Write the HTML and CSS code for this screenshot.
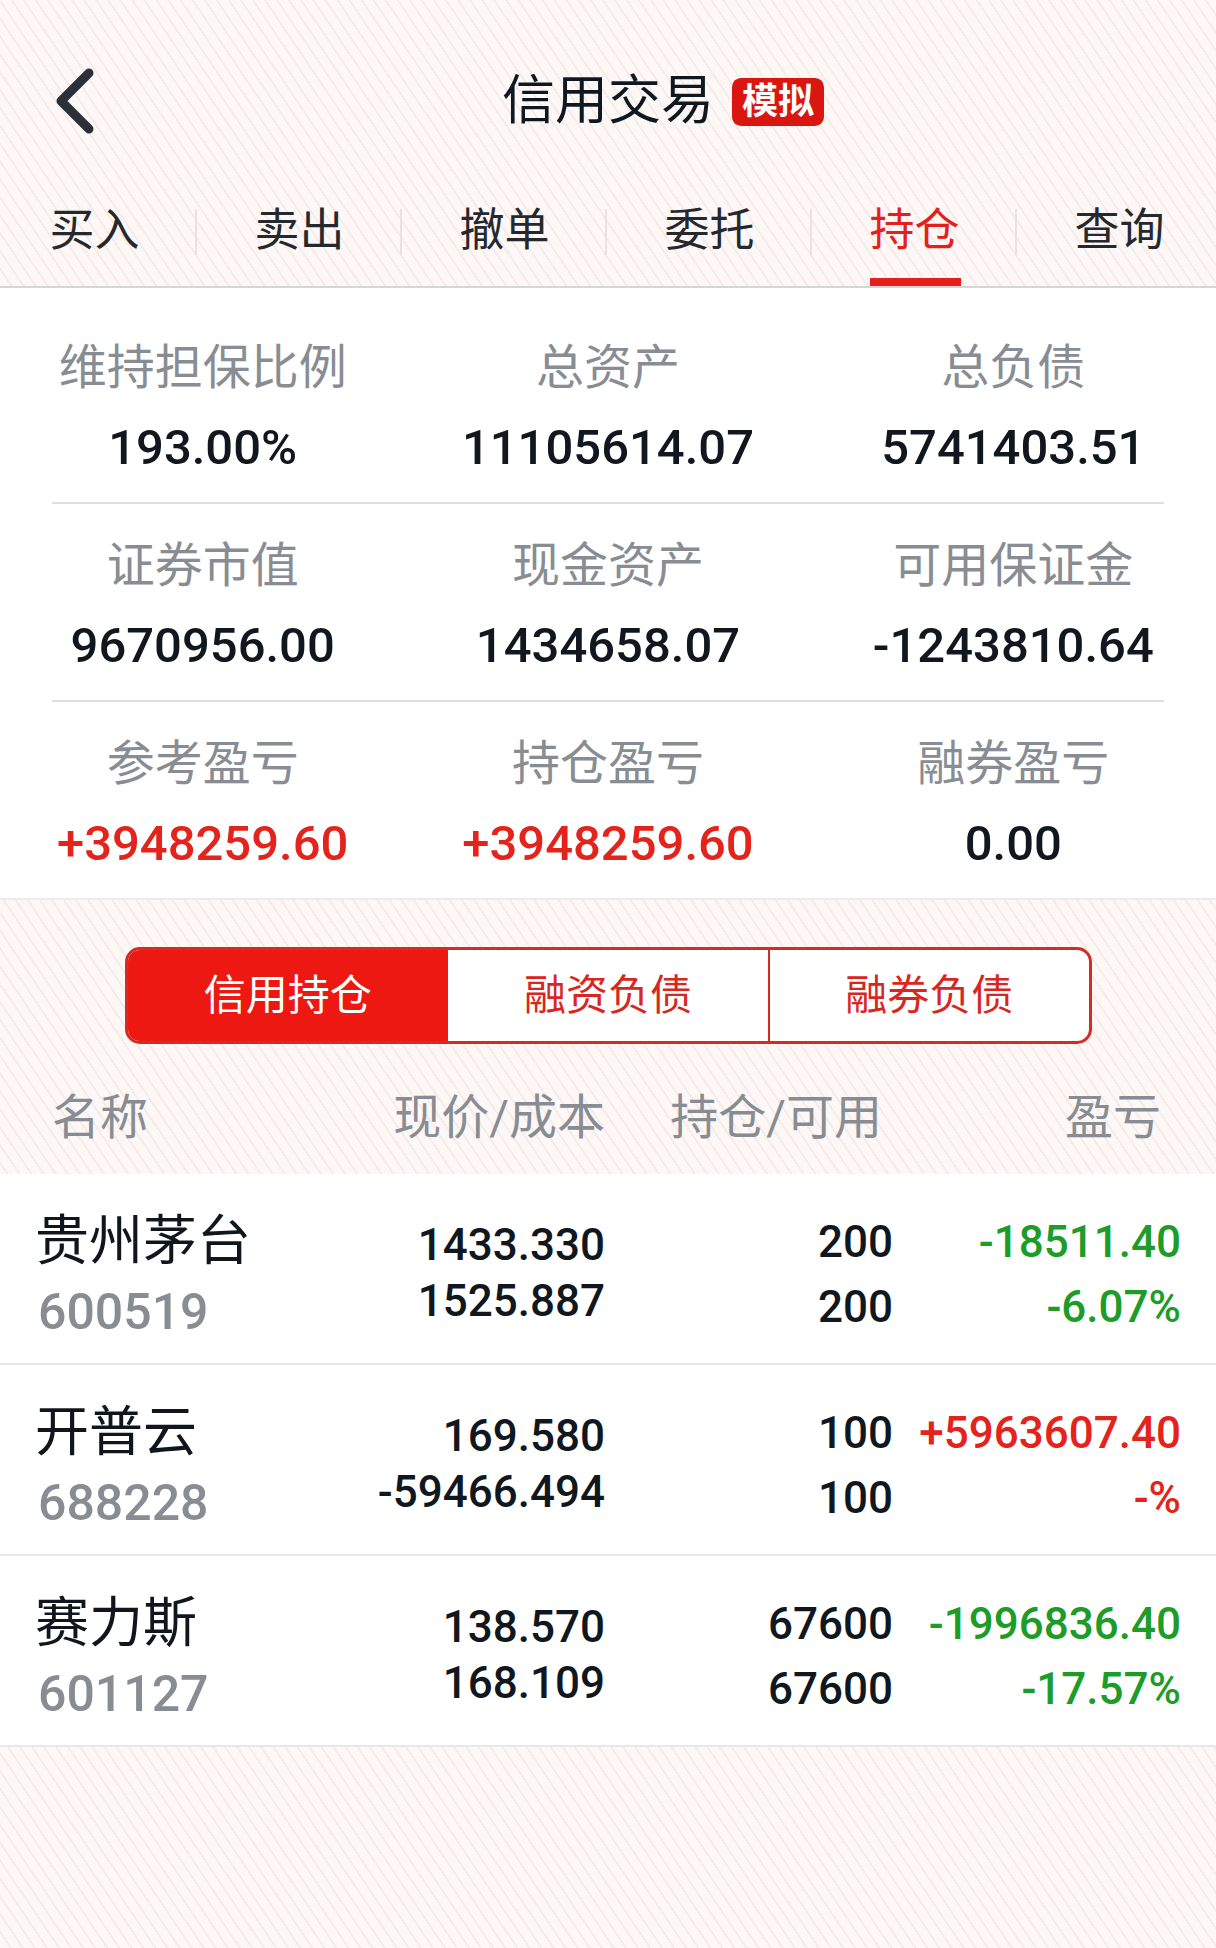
FILE: index.html
```html
<!DOCTYPE html>
<html lang="zh-CN">
  <head>
      <meta charset="UTF-8">
      <meta name="viewport" content="width=device-width, initial-scale=1.0">
      <title>信用交易</title>
      <link rel="stylesheet" href="styles.css">
  </head>
  <body>
      <header class="header">
          <div class="topbar">
              <div class="back">
                  <svg width="48" height="68" viewBox="0 0 48 68">
                      <path d="M41 6 L13 34 L41 62" fill="none" stroke="#2a3139" stroke-width="9" stroke-linecap="round" stroke-linejoin="round"/>
                  </svg>
              </div>
              <h1 class="title">信用交易<span class="badge">模拟</span></h1>
              <div></div>
          </div>
          <nav class="tabs">
              <div class="tab">买入</div>
              <div class="tab">卖出</div>
              <div class="tab">撤单</div>
              <div class="tab">委托</div>
              <div class="tab active">持仓</div>
              <div class="tab">查询</div>
          </nav>
      </header>

      <section class="summary">
          <div class="sum-row">
              <div class="cell"><div class="label">维持担保比例</div><div class="value">193.00%</div></div>
              <div class="cell"><div class="label">总资产</div><div class="value">11105614.07</div></div>
              <div class="cell"><div class="label">总负债</div><div class="value">5741403.51</div></div>
          </div>
          <div class="divider"></div>
          <div class="sum-row">
              <div class="cell"><div class="label">证券市值</div><div class="value">9670956.00</div></div>
              <div class="cell"><div class="label">现金资产</div><div class="value">1434658.07</div></div>
              <div class="cell"><div class="label">可用保证金</div><div class="value">-1243810.64</div></div>
          </div>
          <div class="divider"></div>
          <div class="sum-row">
              <div class="cell"><div class="label">参考盈亏</div><div class="value up">+3948259.60</div></div>
              <div class="cell"><div class="label">持仓盈亏</div><div class="value up">+3948259.60</div></div>
              <div class="cell"><div class="label">融券盈亏</div><div class="value">0.00</div></div>
          </div>
      </section>

      <section class="filter">
          <div class="segment">
              <div class="seg on">信用持仓</div>
              <div class="seg">融资负债</div>
              <div class="seg split">融券负债</div>
          </div>
          <div class="list-head">
              <div class="h-name">名称</div>
              <div class="h-price">现价/成本</div>
              <div class="h-hold">持仓/可用</div>
              <div class="h-pl">盈亏</div>
          </div>
      </section>

      <section class="list">
          <div class="row">
              <div class="name"><div class="stock">贵州茅台</div><div class="code">600519</div></div>
              <div class="price"><div>1433.330</div><div>1525.887</div></div>
              <div class="hold"><div>200</div><div>200</div></div>
              <div class="pl down"><div>-18511.40</div><div>-6.07%</div></div>
          </div>
          <div class="row">
              <div class="name"><div class="stock">开普云</div><div class="code">688228</div></div>
              <div class="price"><div>169.580</div><div>-59466.494</div></div>
              <div class="hold"><div>100</div><div>100</div></div>
              <div class="pl up"><div>+5963607.40</div><div>-%</div></div>
          </div>
          <div class="row">
              <div class="name"><div class="stock">赛力斯</div><div class="code">601127</div></div>
              <div class="price"><div>138.570</div><div>168.109</div></div>
              <div class="hold"><div>67600</div><div>67600</div></div>
              <div class="pl down"><div>-1996836.40</div><div>-17.57%</div></div>
          </div>
      </section>
  </body>
</html>
```

FILE: styles.css
```css
*     {
      box-sizing: border-box;
}
body  {
    margin: 0;
    min-height: 1948px;
    font-family: Roboto, "Noto Sans CJK SC", sans-serif;
    color: #10171e;
    background-color: #fdf7f5;
    background-image: repeating-linear-gradient(56deg, transparent 0 8px, #f5ebe8 8px 10px);
}

/* header */
.header   {
    border-bottom: 2px solid #d6d6d6;
}
.topbar   {
    display: grid;
    grid-template-columns: 1fr auto 1fr;
    align-items: center;
    height: 176px;
    padding-top: 26px;
}
.back     {
    padding-left: 48px;
    display: flex;
    align-items: center;
}
.title    {
    position: relative;
    margin: 0;
    font-size: 53px;
    font-weight: 400;
    line-height: 64px;
    color: #0d1821;
}
.badge    {
    position: absolute;
    left: calc(100% + 18px);
    top: 50%;
    transform: translateY(-48%);
    height: 48px;
    padding: 0 10px;
    border-radius: 9px;
    background: #d9160f;
    color: white;
    font-size: 36px;
    font-weight: 700;
    line-height: 48px;
    white-space: nowrap;
}
.tabs     {
    display: flex;
    height: 110px;
    margin: 0 -6px 0 -8px;
}
.tab      {
    position: relative;
    flex: 1;
    text-align: center;
    font-size: 45px;
    line-height: 110px;
    color: #24292f;
}
.tab::after   {
    content: "";
    position: absolute;
    right: 0;
    top: 33px;
    width: 2px;
    height: 46px;
    background: #ebe1df;
}
.tab:last-child::after  {
    display: none;
}
.tab.active   {
    color: #e3201b;
}
.tab.active::before {
    content: "";
    position: absolute;
    left: 50%;
    bottom: 0;
    width: 91px;
    height: 8px;
    margin-left: -45px;
    background: #e3201b;
}

/* summary */
.summary  {
    background: white;
    padding-top: 18px;
    border-bottom: 2px solid #ececec;
}
.sum-row  {
    display: grid;
    grid-template-columns: repeat(3, 1fr);
    padding: 32px 0 24px;
    text-align: center;
}
.label    {
    font-size: 48px;
    line-height: 60px;
    color: #878d93;
}
.value    {
    margin-top: 20px;
    font-size: 49px;
    font-weight: 500;
    line-height: 60px;
    color: #10171e;
}
.divider  {
    height: 2px;
    margin: 0 52px;
    background: #dedede;
}
.up       {
    color: #e3231c !important;
}
.down     {
    color: #1d9c29 !important;
}

/* filter + list head */
.filter   {
    padding-top: 47px;
}
.segment  {
    display: grid;
    grid-template-columns: repeat(3, 1fr);
    width: 967px;
    height: 97px;
    margin: 0 auto;
    border: 3px solid #d42b22;
    border-radius: 15px;
    overflow: hidden;
    background: white;
}
.seg      {
    text-align: center;
    font-size: 42px;
    line-height: 91px;
    color: #d9261f;
}
.seg.on   {
    background: #ee1813;
    color: white;
}
.seg.split    {
    border-left: 2px solid #d42b22;
}
.list-head,
.row      {
    display: grid;
    grid-template-columns: 270px 300px 288px 288px;
    padding: 0 35px;
}
.list-head    {
    padding-top: 18px;
    font-size: 48px;
    line-height: 112px;
    color: #878d93;
}
.h-name   {
    padding-left: 17px;
}
.h-price  {
    text-align: right;
}
.h-hold   {
    text-align: right;
    padding-right: 11px;
}
.h-pl     {
    text-align: right;
    padding-right: 20px;
}

/* rows */
.list     {
    background: white;
}
.row      {
    height: 191px;
    padding-top: 36px;
    border-bottom: 2px solid #e8e8e8;
}
.stock    {
    font-size: 54px;
    line-height: 64px;
    color: #0f161d;
}
.code     {
    margin-top: 8px;
    padding-left: 3px;
    font-size: 50px;
    font-weight: 500;
    line-height: 60px;
    color: #878d93;
}
.price    {
    padding-top: 7px;
    text-align: right;
    font-size: 44px;
    font-weight: 500;
    line-height: 56px;
}
.hold,
.pl       {
    text-align: right;
    font-size: 44px;
    font-weight: 500;
    line-height: 64px;
}
.hold div:last-child,
.pl div:last-child  {
    line-height: 66px;
}
```
